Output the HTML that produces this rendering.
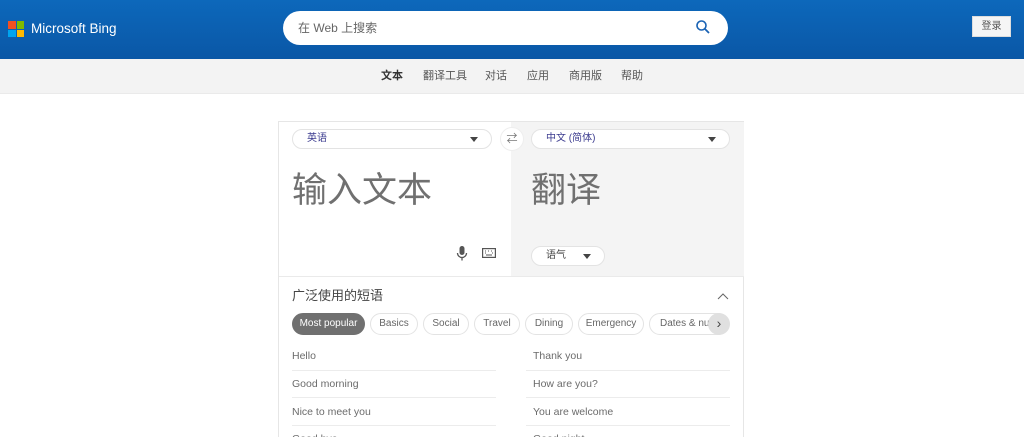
<!DOCTYPE html>
<html><head><meta charset="utf-8"><style>
*{box-sizing:border-box;margin:0;padding:0}
html,body{width:1024px;height:437px;overflow:hidden}
body{background:#fff;font-family:"Liberation Sans","Noto Sans CJK SC",sans-serif;position:relative}
.hdr{position:absolute;left:0;top:0;width:1024px;height:59px;background:linear-gradient(#0d68bb,#0a57a6)}
.logo{position:absolute;left:8px;top:21px;width:16px;height:16px}
.logo i{position:absolute;width:7.5px;height:7.5px}
.brand{position:absolute;left:31px;top:20px;color:#fff;font-size:13.5px;line-height:18px}
.search{position:absolute;left:283px;top:11px;width:445px;height:34px;background:#fff;border-radius:17px;font-size:12px;line-height:14px;color:#666;padding:10px 0 0 15px}
.login{position:absolute;left:972px;top:16px;width:39px;height:21px;background:#f5f5f5;border:1px solid #ddd;font-size:10px;color:#555;text-align:center;line-height:19px}
.nav{position:absolute;left:0;top:59px;width:1024px;height:35px;background:#f3f3f3;border-bottom:1px solid #eaeaea}
.nav span{position:absolute;top:10px;font-size:11px;line-height:14px;color:#555}
.card{position:absolute;left:278px;top:121px;width:466px;height:330px;border:1px solid #e6e6e6;border-bottom:none;background:#fff}
.right{position:absolute;left:232px;top:0;width:233px;height:154px;background:#f4f4f4}
.sel{position:absolute;height:20px;border:1px solid #e3e3e3;border-radius:10px;background:#fff;font-size:10px;line-height:18px;color:#3b3b8f;padding:0 0 0 14px}
.tri{position:absolute;right:13px;top:7px;border:4px solid transparent;border-top:5px solid #444;border-bottom:0}
.big{position:absolute;font-size:35px;line-height:40px;color:#707070;font-family:"Noto Sans CJK SC",sans-serif}
.line{position:absolute;left:0;top:154px;width:465px;height:1px;background:#eaeaea}
.pill{position:absolute;top:191px;height:22px;border:1px solid #e3e3e3;border-radius:11px;font-size:10px;color:#666;line-height:20px;text-align:center;background:#fff}
.ph{position:absolute;font-size:10.5px;line-height:13px;color:#6b6b6b}
.sep{position:absolute;height:1px;background:#ececec;width:204px}
</style></head><body>
<div class="hdr">
<div class="logo"><i style="left:0;top:0;background:#f25022"></i><i style="left:8.5px;top:0;background:#7fba00"></i><i style="left:0;top:8.5px;background:#00a4ef"></i><i style="left:8.5px;top:8.5px;background:#ffb900"></i></div>
<div class="brand">Microsoft Bing</div>
<div class="search">在 Web 上搜索
<svg style="position:absolute;left:412px;top:8px" width="16" height="16" viewBox="0 0 16 16"><circle cx="6.5" cy="6.5" r="4.5" fill="none" stroke="#1a63b4" stroke-width="1.6"/><path d="M10 10l4 4" stroke="#1a63b4" stroke-width="1.8"/></svg></div>
<div class="login">登录</div>
</div>
<div class="nav"><span style="left:381px;font-weight:bold;color:#333">文本</span><span style="left:423px">翻译工具</span><span style="left:485px">对话</span><span style="left:527px">应用</span><span style="left:569px">商用版</span><span style="left:621px">帮助</span></div>
<div class="card">
<div class="right"></div>
<div class="sel" style="left:13px;top:7px;width:200px">英语<div class="tri"></div></div>
<div style="position:absolute;left:221px;top:5px;width:24px;height:24px;border-radius:12px;background:#fff;border:1px solid #eee;font-size:11px;color:#777;text-align:center;line-height:22px">⇄</div>
<div class="sel" style="left:252px;top:7px;width:199px">中文 (简体)<div class="tri"></div></div>
<div class="big" style="left:13px;top:46px">输入文本</div>
<div class="big" style="left:252px;top:46px">翻译</div>
<svg style="position:absolute;left:177px;top:124px" width="12" height="16" viewBox="0 0 12 16"><rect x="3.5" y="0" width="5" height="9" rx="2.5" fill="#555"/><path d="M1.5 7a4.5 4.5 0 0 0 9 0M6 11.5v3" stroke="#555" stroke-width="1.3" fill="none"/></svg>
<svg style="position:absolute;left:203px;top:126px" width="14" height="10" viewBox="0 0 14 10"><rect x="0.6" y="0.6" width="12.8" height="8.8" fill="none" stroke="#555" stroke-width="1.2"/><path d="M3 3h1M6 3h1M9 3h1M3 5h1M10 5h1M4 7h6" stroke="#555"/></svg>
<div class="sel" style="left:252px;top:124px;width:74px;color:#444">语气<div class="tri"></div></div>
<div class="line"></div>
<div style="position:absolute;left:13px;top:166px;font-size:13px;line-height:16px;color:#444">广泛使用的短语</div>
<svg style="position:absolute;left:438px;top:170px" width="12" height="8" viewBox="0 0 12 8"><path d="M1 7l5-5 5 5" stroke="#666" fill="none"/></svg>
<div class="pill" style="left:13px;width:73px;background:#707070;border-color:#707070;color:#fff">Most popular</div>
<div class="pill" style="left:91px;width:48px">Basics</div>
<div class="pill" style="left:144px;width:46px">Social</div>
<div class="pill" style="left:195px;width:46px">Travel</div>
<div class="pill" style="left:246px;width:48px">Dining</div>
<div class="pill" style="left:299px;width:66px">Emergency</div>
<div class="pill" style="left:370px;width:80px;text-align:left;padding-left:10px;overflow:hidden;white-space:nowrap">Dates &amp; num</div>
<div style="position:absolute;left:429px;top:191px;width:22px;height:22px;border-radius:11px;background:#e0e0e0;font-size:14px;color:#444;text-align:center;line-height:20px">›</div>
<div class="ph" style="left:13px;top:228px">Hello</div><div class="ph" style="left:254px;top:228px">Thank you</div>
<div class="sep" style="left:13px;top:248px"></div><div class="sep" style="left:247px;top:248px;width:204px"></div>
<div class="ph" style="left:13px;top:256px">Good morning</div><div class="ph" style="left:254px;top:256px">How are you?</div>
<div class="sep" style="left:13px;top:275px"></div><div class="sep" style="left:247px;top:275px"></div>
<div class="ph" style="left:13px;top:284px">Nice to meet you</div><div class="ph" style="left:254px;top:284px">You are welcome</div>
<div class="sep" style="left:13px;top:303px"></div><div class="sep" style="left:247px;top:303px"></div>
<div class="ph" style="left:13px;top:311px">Good bye</div><div class="ph" style="left:254px;top:311px">Good night</div>
</div>
</body></html>
